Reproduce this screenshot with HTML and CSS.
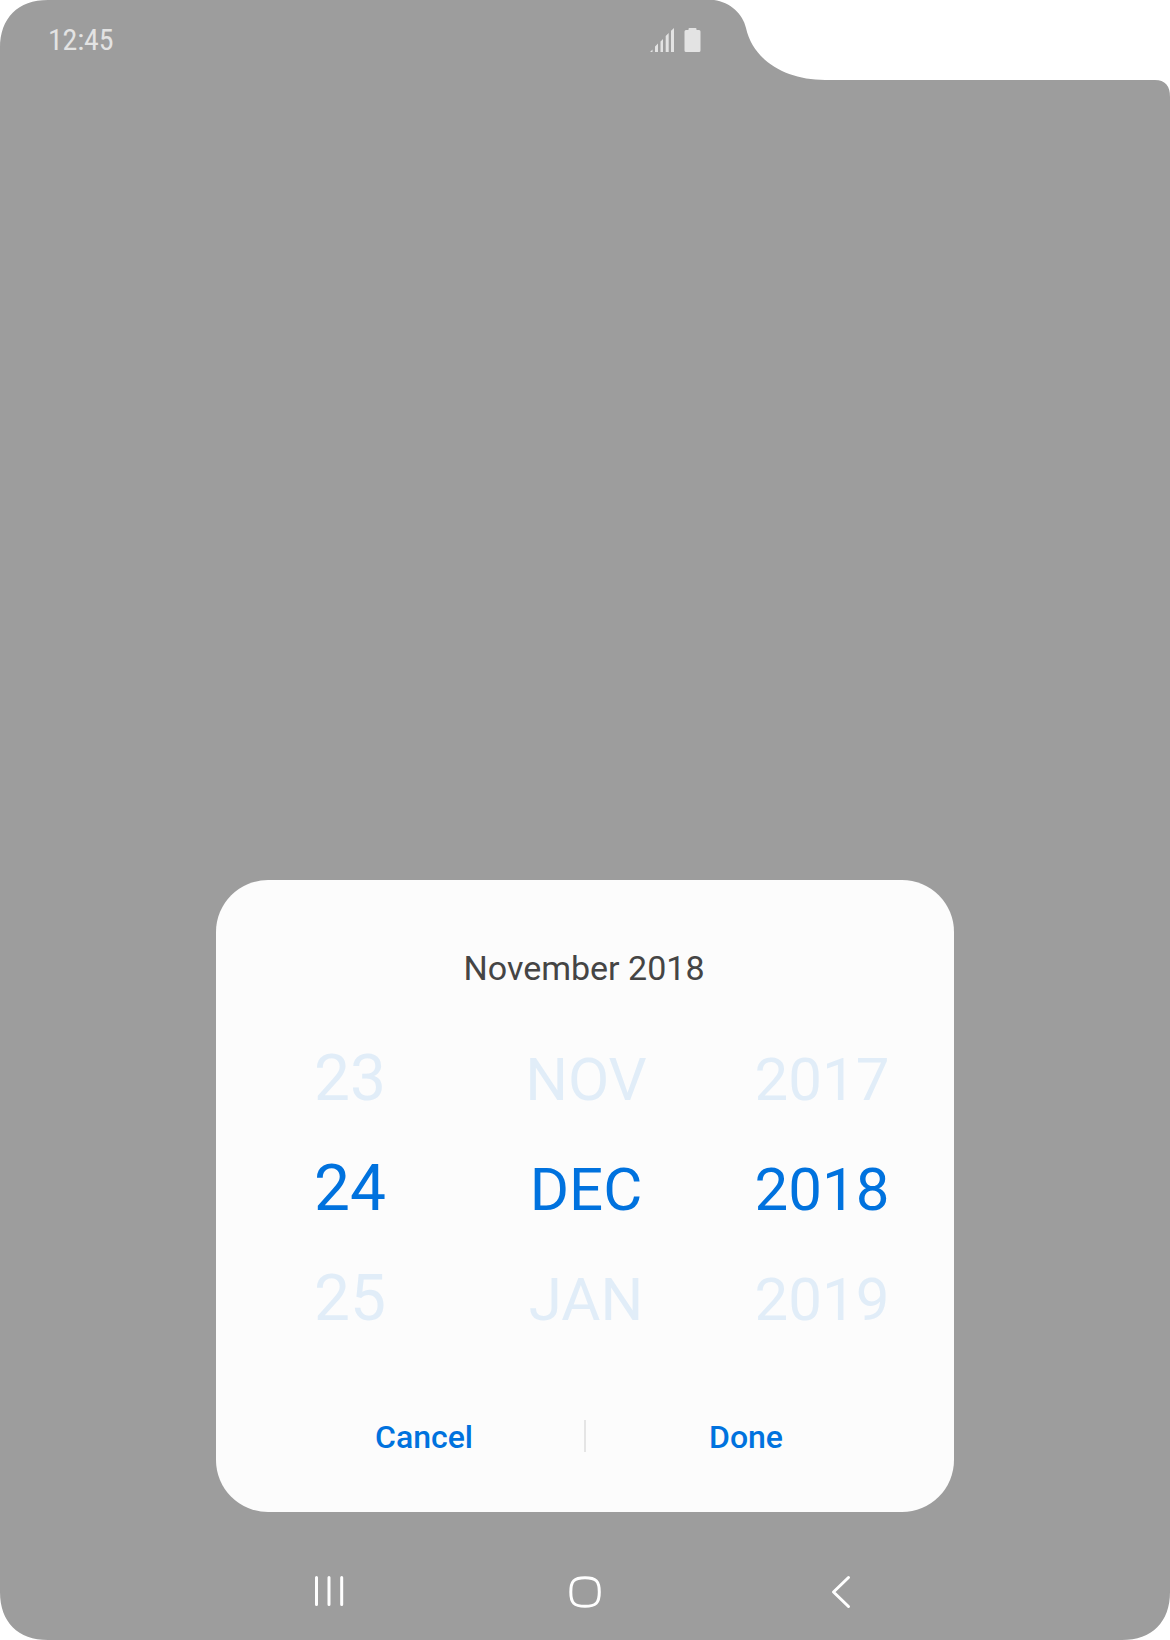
FILE: index.html
```html
<!DOCTYPE html>
<html lang="en">
<head>
<meta charset="utf-8">
<title>Date picker</title>
<link rel="stylesheet" href="styles.css">
</head>
<body>
<div class="screen">
  <header class="status-bar">
    <span class="clock">12:45</span>
    <div class="status-icons">
      <svg class="signal" viewBox="0 0 24 24"><path d="M0 24L2.5 21.5V24zM5 24V18.5L8 15.5V24zM10.5 24V13.5L13 11V24zM15.7 24V8L18.7 5V24zM21 24V2.7L24 0V24z"/></svg>
      <svg class="battery" viewBox="0 0 17 24"><path d="M4.5 2V1Q4.5 0 5.5 0H11.500Q12.500 0 12.500 1V2H15Q16.500 2 16.500 3.500V22.500Q16.500 24 15 24H2Q.5 24 .5 22.500V3.500Q.5 2 2 2z"/></svg>
    </div>
  </header>

  <main class="dialog">
    <h1 class="title">November 2018</h1>
    <div class="picker">
      <div class="column day">
        <span>23</span><span class="selected">24</span><span>25</span>
      </div>
      <div class="column month">
        <span>NOV</span><span class="selected">DEC</span><span>JAN</span>
      </div>
      <div class="column year">
        <span>2017</span><span class="selected">2018</span><span>2019</span>
      </div>
    </div>
    <div class="actions">
      <button class="action cancel">Cancel</button>
      <span class="divider"></span>
      <button class="action done">Done</button>
    </div>
  </main>

  <nav class="nav-bar">
    <svg class="nav-icon" viewBox="0 0 40 40"><path d="M7.500 5.500V32.500M20 5.500V32.500M32.700 5.500V32.500"/></svg>
    <svg class="nav-icon" viewBox="0 0 40 40"><path d="M20 5.800C31 5.800 34.300 9 34.300 20S31 34.300 20 34.300 5.800 31 5.800 20 9 5.800 20 5.800z"/></svg>
    <svg class="nav-icon" viewBox="0 0 40 40"><path d="M27.500 5.500L12.500 20L27.500 34.500"/></svg>
  </nav>
</div>
</body>
</html>
```
FILE: styles.css
```css
* {
  box-sizing: border-box;
}

body {
  margin: 0;
  background: #fff;
  font-family: Roboto, "Liberation Sans", sans-serif;
}

.screen {
  display: flex;
  flex-direction: column;
  width: 1170px;
  height: 1640px;
  background: #9d9d9d;
  clip-path: path("M0 48C0 18 18 0 48 0H714C730 2 743 14 746 28C753 60 785 80 825 80H1155Q1170 80 1170 97V1592C1170 1622 1152 1640 1122 1640H48C18 1640 0 1622 0 1592Z");
}

.status-bar {
  display: flex;
  justify-content: space-between;
  align-items: center;
  width: 746px;
  height: 80px;
  padding: 0 45px 0 48px;
}

.clock {
  color: #e3e3e3;
  font-family: "Roboto Condensed", Roboto, sans-serif;
  font-size: 30px;
  font-stretch: 75%;
  letter-spacing: -0.2px;
  line-height: 80px;
}

.status-icons {
  display: flex;
  gap: 10px;
  fill: #e3e3e3;
}

.signal {
  width: 24px;
  height: 24px;
}

.battery {
  width: 17px;
  height: 24px;
}

.dialog {
  width: 738px;
  height: 632px;
  margin: 800px auto 0;
  background: #fcfcfc;
  border-radius: 52px;
}

.title {
  margin: 0;
  padding: 68px 2px 0 0;
  color: #454545;
  font-size: 34px;
  font-weight: 400;
  line-height: 40px;
  text-align: center;
}

.picker {
  display: grid;
  grid-template-columns: 266px 206px 266px;
  height: 330px;
  margin-top: 35px;
}

.column {
  display: grid;
  grid-template-rows: repeat(3, 110px);
  padding: 2px 0 0 2px;
  color: #e1edf8;
  font-size: 60px;
  line-height: 110px;
  text-align: center;
}

.day {
  padding-top: 1px;
  font-size: 64px;
}

.selected {
  color: #0072de;
}

.actions {
  display: flex;
  align-items: center;
  justify-content: center;
  margin-top: 47px;
}

.action {
  width: 322px;
  height: 72px;
  padding: 2px 0 0;
  border: 0;
  background: none;
  color: #0072de;
  font: 500 32px/70px Roboto, sans-serif;
}

.cancel {
  padding-left: 2px;
}

.done {
  padding-right: 2px;
}

.divider {
  width: 2px;
  height: 32px;
  background: #e5e5e5;
}

.nav-bar {
  display: flex;
  justify-content: center;
  gap: 216px;
  padding-top: 60px;
}

.nav-icon {
  width: 40px;
  height: 40px;
  fill: none;
  stroke: #fff;
  stroke-width: 3;
  stroke-linecap: round;
  stroke-linejoin: round;
}
```
